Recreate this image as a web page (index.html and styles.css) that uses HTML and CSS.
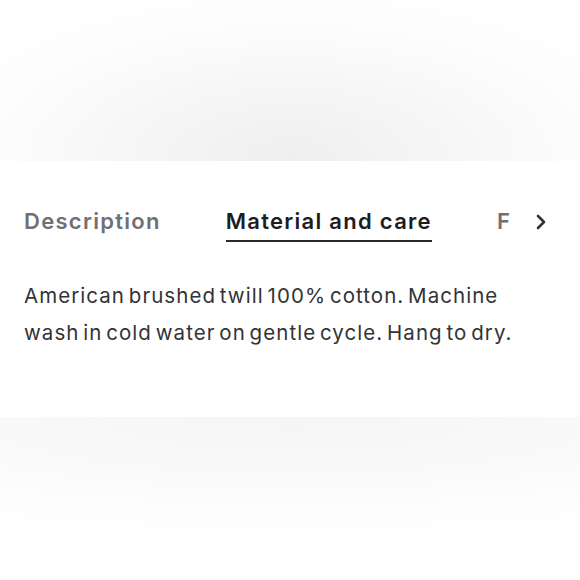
FILE: index.html
```html
<!DOCTYPE html>
<html lang="en">
<head>
<meta charset="utf-8">
<title>Product details</title>
<link rel="stylesheet" href="styles.css">
</head>
<body>
<div class="page">
  <div class="shade shade-top"></div>
  <section class="card">
    <div class="tabbar">
      <nav class="tabs">
        <button class="tab">Description</button>
        <button class="tab active">Material and care</button>
        <button class="tab">Fit</button>
      </nav>
      <button class="next" aria-label="Next">
        <svg width="12" height="16" viewBox="0 0 12 16"><path d="M3 2 L9 8 L3 14" fill="none" stroke="#333336" stroke-width="2.6" stroke-linecap="round" stroke-linejoin="round"/></svg>
      </button>
    </div>
    <p class="copy">American brushed twill 100% cotton. Machine wash in cold water on gentle cycle. Hang to dry.</p>
  </section>
  <div class="shade shade-bottom"></div>
</div>
</body>
</html>
```
FILE: styles.css
```css
html, body {
  margin: 0;
  padding: 0;
  background: #ffffff;
}
body {
  font-family: Inter, "Liberation Sans", sans-serif;
  width: 580px;
  height: 580px;
  overflow: hidden;
}
.page {
  display: flex;
  flex-direction: column;
  height: 580px;
}
.shade {
  flex: none;
}
.shade-top {
  height: 161px;
  background: radial-gradient(ellipse 360px 160px at 290px 158px, #efeff0 0%, #f6f6f7 45%, #fcfcfc 80%, #fefefe 100%);
}
.shade-bottom {
  height: 163px;
  background: radial-gradient(ellipse 620px 110px at 290px 0px, #f5f5f6 0%, #f9f9f9 50%, #fdfdfd 85%, #fefefe 100%);
}
.card {
  height: 256px;
  background: #ffffff;
  padding: 0 24px;
  box-sizing: border-box;
}
.tabbar {
  position: relative;
  margin-top: 46px;
  overflow: hidden;
  margin-right: -24px;
}
.tabs {
  display: flex;
  gap: 65px;
  white-space: nowrap;
}
.tab {
  border: 0;
  background: none;
  padding: 0 0 5px;
  font: 600 22px/28px Inter, "Liberation Sans", sans-serif;
  color: #707074;
  letter-spacing: 1.28px;
  border-bottom: 2px solid transparent;
  flex: none;
}
.tab.active {
  color: #1d1d1f;
  border-bottom-color: #2a2a2c;
}
.next {
  position: absolute;
  top: 0;
  right: 0;
  width: 69px;
  height: 30px;
  border: 0;
  background: #ffffff;
  display: flex;
  align-items: center;
  justify-content: flex-start;
  padding: 0 0 0 24px;
}
.copy {
  margin: 35px 0 0;
  max-width: 515px;
  font-size: 20.5px;
  line-height: 37px;
  letter-spacing: 1.05px;
  word-spacing: -3px;
  color: #333336;
}
```
